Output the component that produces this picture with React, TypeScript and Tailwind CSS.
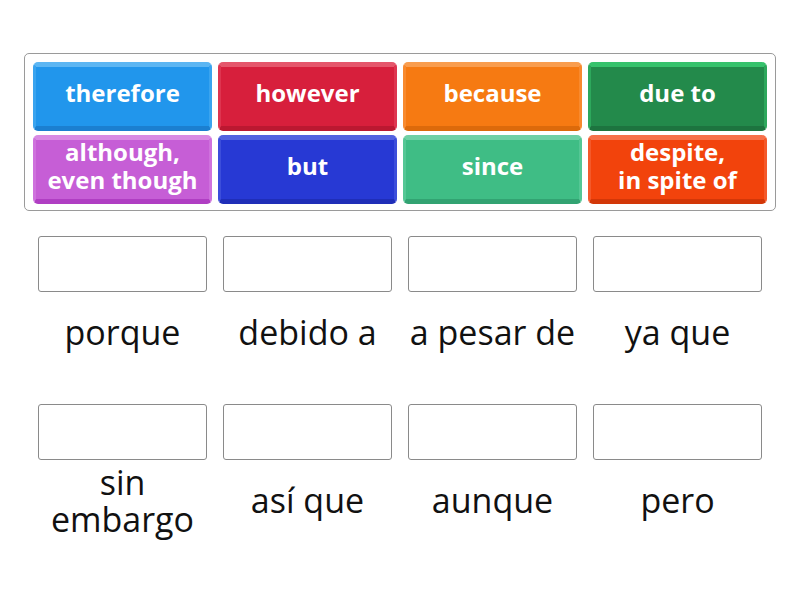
const tiles = [
  { label: 'therefore', face: 'bg-[#2196ec]', top: 'border-t-[#5cb6f3]', side: 'border-x-[#3aa4ef]', bottom: 'border-b-[#1b7fd0]' },
  { label: 'however', face: 'bg-[#d71f3c]', top: 'border-t-[#e5566b]', side: 'border-x-[#de3550]', bottom: 'border-b-[#bb1831]' },
  { label: 'because', face: 'bg-[#f67a12]', top: 'border-t-[#f99d4e]', side: 'border-x-[#f88a2e]', bottom: 'border-b-[#dc6a0b]' },
  { label: 'due to', face: 'bg-[#238a4b]', top: 'border-t-[#36c26c]', side: 'border-x-[#2da85c]', bottom: 'border-b-[#1d743f]' },
  { label: 'although, even though', face: 'bg-[#c65ed6]', top: 'border-t-[#d88ae3]', side: 'border-x-[#cf72dd]', bottom: 'border-b-[#b03ec3]' },
  { label: 'but', face: 'bg-[#2739d4]', top: 'border-t-[#5262e0]', side: 'border-x-[#3c4edb]', bottom: 'border-b-[#1f2eb8]' },
  { label: 'since', face: 'bg-[#3fbd85]', top: 'border-t-[#6fd0a5]', side: 'border-x-[#55c795]', bottom: 'border-b-[#32a372]' },
  { label: 'despite, in spite of', face: 'bg-[#f2430c]', top: 'border-t-[#f6704a]', side: 'border-x-[#f4592a]', bottom: 'border-b-[#d33708]' },
]

const lines: Record<string, string[]> = {
  'although, even though': ['although,', 'even though'],
  'despite, in spite of': ['despite,', 'in spite of'],
}

const row1 = ['porque', 'debido a', 'a pesar de', 'ya que']
const row2 = ['sin embargo', 'así que', 'aunque', 'pero']

function Slot({ text }: { text: string }) {
  const parts = text === 'sin embargo' ? ['sin', 'embargo'] : [text]
  return (
    <div className="flex flex-col items-center px-2">
      <div className="w-full h-[56px] border border-[#8a8a8a] rounded-[3px] bg-white" />
      <div className="h-[84px] flex flex-col items-center justify-center pb-[3px] text-[34px] leading-[37px] text-[#111] whitespace-nowrap">
        {parts.map((p) => (
          <span key={p}>{p}</span>
        ))}
      </div>
    </div>
  )
}

export default function App() {
  return (
    <div className="w-[800px] h-[600px] bg-white font-['Open_Sans',sans-serif] pt-[53px]">
      <div className="mx-[24px] border border-[#9a9a9a] rounded-[5px] px-[8px] pt-[8px] pb-[6px]">
        <div className="grid grid-cols-4 gap-x-[6px] gap-y-[4px]">
          {tiles.map((t) => (
            <div
              key={t.label}
              className={`h-[69px] rounded-[5px] border-t-[5px] border-x-[3px] border-b-[5px] ${t.face} ${t.top} ${t.side} ${t.bottom} flex flex-col items-center justify-center pb-[8px] text-white font-bold text-[24px] leading-[28px]`}
            >
              {(lines[t.label] ?? [t.label]).map((l) => (
                <span key={l}>{l}</span>
              ))}
            </div>
          ))}
        </div>
      </div>
      <div className="grid grid-cols-4 mx-[30px] mt-[25px]">
        {row1.map((w) => (
          <Slot key={w} text={w} />
        ))}
      </div>
      <div className="grid grid-cols-4 mx-[30px] mt-[28px]">
        {row2.map((w) => (
          <Slot key={w} text={w} />
        ))}
      </div>
    </div>
  )
}
